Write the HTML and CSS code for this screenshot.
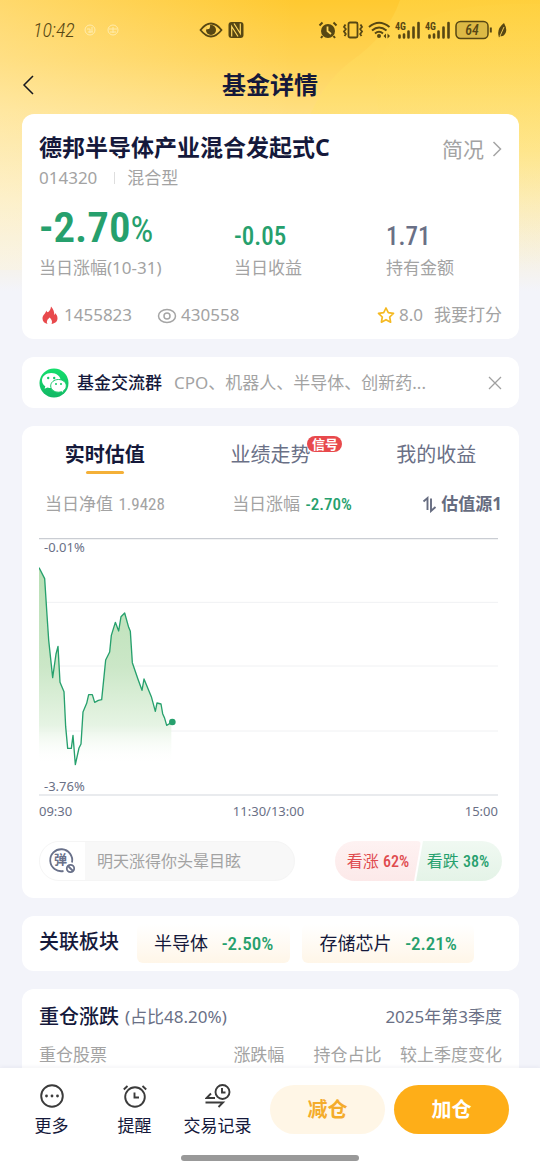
FILE: index.html
```html
<!DOCTYPE html>
<html lang="zh-CN">
<head>
<meta charset="utf-8">
<meta name="viewport" content="width=device-width, initial-scale=1">
<title>基金详情</title>
<link rel="stylesheet" href="styles.css">
</head>
<body>
<div class="app">
  <svg class="backdrop" viewBox="0 0 540 300" preserveAspectRatio="none" aria-hidden="true">
    <defs>
      <linearGradient id="sky" x1="0" y1="0" x2="0" y2="1">
        <stop offset="0" stop-color="#ffc930"/>
        <stop offset="0.2" stop-color="#ffd355"/>
        <stop offset="0.37" stop-color="#ffdf80"/>
        <stop offset="0.66" stop-color="#fcedbf"/>
        <stop offset="0.97" stop-color="#f3f4fa"/>
      </linearGradient>
      <linearGradient id="haze" x1="0" y1="0" x2="1" y2="0">
        <stop offset="0" stop-color="#fff6dd" stop-opacity="0.35"/>
        <stop offset="0.55" stop-color="#fff6dd" stop-opacity="0"/>
      </linearGradient>
      <linearGradient id="glow" x1="0" y1="0" x2="0" y2="1">
        <stop offset="0" stop-color="#ffd445" stop-opacity="0.6"/>
        <stop offset="0.5" stop-color="#ffe680" stop-opacity="0.5"/>
        <stop offset="0.9" stop-color="#f8efcf" stop-opacity="0"/>
      </linearGradient>
    </defs>
    <rect width="540" height="300" fill="url(#sky)"/>
    <rect width="540" height="270" fill="url(#haze)"/>
    <path d="M400 0Q388 36 350 62 322 84 308 120V300H540V0Z" fill="url(#glow)"/>
    <path d="M540 4Q380 0 376 80 376 110 384 130V300H540Z" fill="url(#glow)" opacity=".35"/>
  </svg>

  <header class="top">
    <div class="status">
      <div class="status-left">
        <span class="clock">10:42</span>
        <svg width="36" height="14" viewBox="0 0 36 14" fill="none" stroke="#fff3c4" opacity=".75"><circle cx="7" cy="7" r="5"/><path d="M4 6h3v4M9 4v5M5 9h5"/><circle cx="30" cy="7" r="5"/><path d="M26 6h8M27 9h6M30 4v6"/></svg>
      </div>
      <div class="status-mid">
        <svg width="24" height="18" viewBox="0 0 24 18"><path d="M1.500 9Q6.500 2.500 12 2.500T22.500 9Q17.500 15.500 12 15.500T1.500 9Z" fill="none" stroke="#574713" stroke-width="1.800"/><circle cx="12" cy="9" r="5" fill="#574713"/><path d="M10.500 3.500a3 3 0 0 1-1 4.500L7 8.500 7.500 5z" fill="#ffd75e"/></svg>
        <svg width="16" height="18" viewBox="0 0 16 18"><rect x=".5" y="1" width="15" height="16" rx="3" fill="#574713"/><path d="M3.700 15.500V5.500l6.300 10M12.300 2.500v10L6 2.500" fill="none" stroke="#ffd75e" stroke-width="1.200"/></svg>
      </div>
      <div class="status-right">
        <svg width="20" height="18" viewBox="0 0 20 18"><circle cx="10" cy="10" r="7" fill="#574713"/><path d="M1.500 4.500 4.500 1.500M18.500 4.500 15.500 1.500M4.500 15 3 17M15.500 15l1.500 2" stroke="#574713" stroke-width="2"/><path d="M9.500 5.500V10l3.500 3" fill="none" stroke="#ffd75e" stroke-width="1.800"/></svg>
        <svg width="22" height="18" viewBox="0 0 22 18" fill="none" stroke="#574713" stroke-width="1.800"><rect x="6.500" y="1.500" width="9" height="15" rx="1.500"/><path d="M3.500 3.500 2 6l1.800 2L2 10.500 3.800 13 2.500 15M18.500 3.500 20 6l-1.800 2 1.800 2.500-1.800 2.500 1.300 2"/></svg>
        <svg width="23" height="18" viewBox="0 0 23 18" fill="none" stroke="#574713" stroke-width="2"><path d="M1 6Q11 -2.500 21.500 6M4 9.500q7-6 14.500 0M7 12.500q4-3.500 8 0"/><circle cx="11" cy="15" r="2" fill="#574713" stroke="none"/><path d="m18 12.500-2.500 2.500 2.500 2.500zM19.500 12.500 22 15l-2.500 2.500z" fill="#574713" stroke="none"/></svg>
        <svg width="26" height="18" viewBox="0 0 26 18"><text class="tiny" x="0" y="9">4G</text><path d="M4.500 16.500v-2M9 16.500v-3M13.500 16.500v-6M18.500 16.500V6.500M23.500 16.500V2" stroke="#574713" stroke-width="2.600" stroke-linecap="round"/></svg>
        <svg width="26" height="18" viewBox="0 0 26 18"><text class="tiny" x="0" y="9">4G</text><path d="M4.500 16.500v-2M9 16.500v-3M13.500 16.500v-6M18.500 16.500V6.500M23.500 16.500V2" stroke="#574713" stroke-width="2.600" stroke-linecap="round"/></svg>
        <svg width="38" height="20" viewBox="0 0 38 20"><rect x="1" y="1.500" width="32" height="17" rx="4.500" fill="#dcb945" stroke="#574713" stroke-width="1.500"/><path d="M35.800 7.500v5" stroke="#574713" stroke-width="2"/><text class="charge" x="17" y="15" text-anchor="middle">64</text></svg>
        <svg width="10" height="16" viewBox="0 0 10 16"><path d="M7 1q4 7 1 11-2 3-5 2l-1 1.500Q-1 7 7 1Z" fill="#574713"/><path d="M7 5 3 14" stroke="#ffd75e" stroke-width=".9"/></svg>
      </div>
    </div>
    <div class="titlebar">
      <button class="back" type="button" aria-label="返回"><svg width="14" height="20" viewBox="0 0 14 20" fill="none" stroke="#17181f" stroke-width="1.500"><path d="M11 1 2 10l9 9"/></svg></button>
      <h1>基金详情</h1>
    </div>
  </header>

  <main class="content">
    <section class="card fund">
      <div class="fund-head">
        <div>
          <h2>德邦半导体产业混合发起式C</h2>
          <p class="fund-sub"><span>014320</span><i></i><span>混合型</span></p>
        </div>
        <a class="brief" href="#brief">简况<svg width="10" height="16" viewBox="0 0 10 16" fill="none" stroke="#a5a5a5" stroke-width="1.500"><path d="m1.500 1 7 7-7 7"/></svg></a>
      </div>
      <dl class="stats">
        <div><dd class="num big green">-2.70<span class="pct">%</span></dd><dt>当日涨幅(10-31)</dt></div>
        <div><dd class="num green">-0.05</dd><dt>当日收益</dt></div>
        <div><dd class="num slate">1.71</dd><dt>持有金额</dt></div>
      </dl>
      <div class="meta">
        <span class="meta-item"><svg width="22" height="20" viewBox="0 0 22 20"><path d="M12 1.500c-.4 3-1 4-3 5.800C7.800 6.800 7.500 6.200 7.300 5.500 6.500 9 3.500 10 3.500 13.500c0 3 2.200 5 5.200 5.500-1-1-1-2.300-.5-3.600.5-1.300 1.600-1.600 2.300-2.900 1.700 1.300 3.400 4 2 6.500 3.500-.6 6-2.500 6-5.800 0-2.400-1.200-3.600-2.200-5.200-.1 1-.4 1.500-1 2C15.500 6.500 14 3.500 12 1.500Z" fill="#e8494c"/></svg>1455823</span>
        <span class="meta-item"><svg width="22" height="20" viewBox="0 0 22 20" fill="none" stroke="#a5a5a5" stroke-width="1.500"><ellipse cx="11" cy="11" rx="8.500" ry="6.500"/><circle cx="11" cy="11" r="3"/></svg>430558</span>
        <a class="meta-item score" href="#score"><svg width="20" height="20" viewBox="0 0 20 20" fill="none" stroke="#f5b921" stroke-width="1.700" stroke-linejoin="round"><path d="m10 3 2.300 4.700 5.200.7-3.800 3.600.9 5.200L10 14.700l-4.600 2.500.9-5.200L2.500 8.400l5.200-.7z"/></svg><span>8.0</span><span>我要打分</span></a>
      </div>
    </section>

    <section class="card group">
      <svg width="30" height="30" viewBox="0 0 30 30"><defs><linearGradient id="wx" x1="0" y1="0" x2="0" y2="1"><stop offset="0" stop-color="#14df6c"/><stop offset="1" stop-color="#12b765"/></linearGradient></defs><circle cx="15" cy="15" r="14.500" fill="url(#wx)"/><path d="M12.300 5C7 5 3 8.300 3 12.500c0 2.400 1.300 4.500 3.300 5.800L5.600 20.800 8.500 19.400c1.200.4 2.400.6 3.800.6 5.200 0 9.300-3.200 9.300-7.500S17.500 5 12.300 5Z" fill="#fff"/><circle cx="9.200" cy="10" r="1.200" fill="#13c868"/><circle cx="15.200" cy="10" r="1.200" fill="#13c868"/><path d="M19.500 11.500c-4.400 0-7.800 2.800-7.800 6.400s3.400 6.300 7.800 6.300c1.100 0 2-.2 3-.5l2.500 1.300-.6-2.200c1.700-1.200 2.900-2.900 2.900-4.900 0-3.600-3.400-6.400-7.800-6.400Z" fill="#fff" stroke="#13c868"/><circle cx="17" cy="16" r="1" fill="#13c868"/><circle cx="22" cy="16" r="1" fill="#13c868"/></svg>
      <strong>基金交流群</strong>
      <span class="topics">CPO、机器人、半导体、创新药...</span>
      <button class="close" type="button" aria-label="关闭"><svg width="14" height="14" viewBox="0 0 14 14" stroke="#a0a0a0" stroke-width="1.300"><path d="m1 1 12 12M13 1 1 13"/></svg></button>
    </section>

    <section class="card valuation">
      <nav class="tabs">
        <button class="tab active" type="button">实时估值</button>
        <button class="tab" type="button"><span class="tab-label">业绩走势<em class="badge">信号</em></span></button>
        <button class="tab" type="button">我的收益</button>
      </nav>
      <div class="quote">
        <span>当日净值 <b class="num net">1.9428</b></span>
        <span>当日涨幅 <b class="num green">-2.70%</b></span>
        <button class="source" type="button"><svg width="15" height="18" viewBox="0 0 15 18" fill="none" stroke="#666c80" stroke-width="1.900"><path d="M1.500 6.500 5.500 3v12M9 3.500v12.500l4.500-4"/></svg>估值源1</button>
      </div>
      <div class="chart">
        <span class="limit high">-0.01%</span>
        <svg viewBox="27 24 1377 774" preserveAspectRatio="none" role="img" aria-label="估值走势">
          <defs><linearGradient id="area" x1="0" y1="0" x2="0" y2="1"><stop offset="0" stop-color="#b8dfb4"/><stop offset="0.500" stop-color="#cbe7c7"/><stop offset="0.800" stop-color="#e6f4e4"/><stop offset="1" stop-color="#fff" stop-opacity="0"/></linearGradient></defs>
          <path d="M27 217H1404M27 408H1404M27 603H1404" stroke="#f0f1f3" stroke-width="3"/>
          <path d="M27 26H1404" stroke="#cacdd3" stroke-width="4"/>
          <path d="M27 795H1404" stroke="#e2e4e8" stroke-width="4"/>
          <path d="M27 113 44 146 50 240 56 330 68 443 78 372 84 349 90 457 102 485 107 590 113 655H124L129 616 136 704 147 654 153 642 159 546 170 520 176 494H187L194 517 205 511 215 509 222 440 227 390 239 366 244 316 256 277 266 303 273 260 284 249 296 292 301 304 307 398 324 448 336 481 342 447 364 500 376 544 381 519 393 522 398 551 404 565 410 586 424 576V700H27Z" fill="url(#area)"/>
          <path d="M27 113 44 146 50 240 56 330 68 443 78 372 84 349 90 457 102 485 107 590 113 655H124L129 616 136 704 147 654 153 642 159 546 170 520 176 494H187L194 517 205 511 215 509 222 440 227 390 239 366 244 316 256 277 266 303 273 260 284 249 296 292 301 304 307 398 324 448 336 481 342 447 364 500 376 544 381 519 393 522 398 551 404 565 410 586 427 576" fill="none" stroke="#26a06d" stroke-width="4" stroke-linejoin="round"/>
          <circle cx="427" cy="576" r="10" fill="#26a06d"/>
        </svg>
        <span class="limit low">-3.76%</span>
      </div>
      <div class="axis"><span>09:30</span><span>11:30/13:00</span><span>15:00</span></div>
      <div class="actions">
        <div class="barrage">
          <button type="button" aria-label="弹幕开关"><svg width="28" height="28" viewBox="0 0 28 28" fill="none" stroke="#69718a" stroke-width="1.800"><path d="M15.500 24A11 11 0 1 1 24 15.500"/><text x="12.500" y="17" text-anchor="middle" class="dan">弹</text><circle cx="22.500" cy="21.500" r="3.700"/><path d="m20 19 5 5"/></svg></button>
          <input type="text" aria-label="弹幕" placeholder="明天涨得你头晕目眩">
        </div>
        <div class="votes">
          <button class="vote up" type="button">看涨 <b class="num">62%</b></button>
          <button class="vote down" type="button">看跌 <b class="num">38%</b></button>
        </div>
      </div>
    </section>

    <section class="card sectors">
      <h3>关联板块</h3>
      <a class="chip" href="#semi">半导体 <b class="num green">-2.50%</b></a>
      <a class="chip" href="#memory">存储芯片 <b class="num green">-2.21%</b></a>
    </section>

    <section class="card holdings">
      <div class="holdings-head"><h3>重仓涨跌</h3><span>(占比48.20%)</span><span class="period">2025年第3季度</span></div>
      <table><thead><tr><th>重仓股票</th><th>涨跌幅</th><th>持仓占比</th><th>较上季度变化</th></tr></thead></table>
    </section>
  </main>

  <footer class="bottom">
    <div class="toolbar">
      <button class="tool" type="button"><svg width="26" height="26" viewBox="0 0 26 26" fill="none" stroke="#3b3b3b" stroke-width="1.900"><circle cx="13" cy="13" r="10.800"/><g fill="#3b3b3b" stroke="none"><circle cx="7.500" cy="13" r="1.400"/><circle cx="13" cy="13" r="1.400"/><circle cx="18.500" cy="13" r="1.400"/></g></svg>更多</button>
      <button class="tool" type="button"><svg width="26" height="26" viewBox="0 0 26 26" fill="none" stroke="#3b3b3b" stroke-width="1.900"><circle cx="13" cy="14" r="9.800"/><path d="M1.800 6.500 5.500 3M24.200 6.500 20.500 3M12.500 9.500v5h4.500"/></svg>提醒</button>
      <button class="tool" type="button"><svg width="26" height="26" viewBox="0 0 26 26" fill="none" stroke="#3b3b3b" stroke-width="1.900"><circle cx="17.500" cy="9" r="7"/><path d="M17 5v4.500h3.500M10 15H1.500L6 10.500M.500 19.500H18L13.500 24"/></svg>交易记录</button>
      <button class="cta light" type="button">减仓</button>
      <button class="cta" type="button">加仓</button>
    </div>
    <div class="home"></div>
  </footer>
</div>
</body>
</html>
```
FILE: styles.css
```css
* { box-sizing: border-box; }

body,
h1, h2, h3, p, dl, dd, dt { margin: 0; }

body {
  font-family: "Noto Sans", "Noto Sans CJK SC", sans-serif;
  font-size: 17px;
  line-height: 24px;
  color: #15193b;
  background: #f3f4fa;
}

button,
input {
  font: inherit;
  color: inherit;
  border: 0;
  padding: 0;
  margin: 0;
  background: none;
}

a { color: inherit; text-decoration: none; }
svg { display: block; flex: none; }

.app {
  position: relative;
  display: flex;
  flex-direction: column;
  height: 100vh;
}

.backdrop {
  position: absolute;
  inset: 0;
  width: 100%;
  height: 300px;
}

.num {
  font-family: "Roboto Condensed", "Liberation Sans Narrow", Roboto, sans-serif;
  font-weight: 500;
}
.green { color: #26a06d; }
.slate { color: #6a7086; }

/* Status bar and title */
.top { position: relative; }

.status {
  display: flex;
  align-items: center;
  height: 60px;
  padding: 0 33px;
}
.status-left,
.status-mid,
.status-right { display: flex; align-items: center; }
.status-left { flex: 0 0 35%; gap: 8px; }
.status-mid { flex: 1; gap: 5px; }
.status-right { gap: 4px; }
.clock {
  font-family: "Roboto Condensed", "Liberation Sans Narrow", Roboto, sans-serif;
  font-style: italic;
  font-weight: 300;
  font-size: 20px;
  color: #574713;
}
.tiny { font: 700 10px "Roboto Condensed", "Liberation Sans Narrow", Roboto, sans-serif; fill: #574713; }
.charge { font: italic 500 14px "Roboto Condensed", "Liberation Sans Narrow", Roboto, sans-serif; fill: #574713; }

.titlebar {
  display: grid;
  grid-template-columns: 1fr auto 1fr;
  align-items: center;
  height: 54px;
  padding: 0 22px 4px;
}
.titlebar h1 { font-size: 24px; line-height: 32px; }
.back { justify-self: start; }

/* Cards */
.content {
  position: relative;
  flex: 1;
  min-height: 0;
  overflow-y: auto;
  scrollbar-width: none;
  display: flex;
  flex-direction: column;
  gap: 18px;
  padding: 0 21px 0 22px;
}
.card {
  flex: none;
  padding: 0 17px;
  border-radius: 12px;
  background: #fff;
}

.fund { padding-top: 19px; padding-bottom: 12px; color: #a3a3a3; }
.fund-head { display: flex; justify-content: space-between; }
.fund h2 { font-size: 23px; line-height: 28px; color: #15193b; }
.fund-sub { display: flex; align-items: center; margin-top: 5px; }
.fund-sub i { width: 1px; height: 12px; margin: 0 12px 0 17px; background: #dedede; }
.brief {
  display: flex;
  align-items: center;
  gap: 8px;
  height: 32px;
  font-size: 21px;
}
.stats {
  display: grid;
  grid-template-columns: 195fr 152fr 116fr;
  margin-top: 17px;
}
.stats div { display: flex; flex-direction: column; justify-content: flex-end; }
.stats dt { margin-top: 9px; }
.stats dd { font-size: 25px; line-height: 20px; }
.stats dd.big { font-size: 43px; font-weight: 600; line-height: 40px; }
.stats .pct { font-size: 36px; font-weight: 400; line-height: 20px; }
.meta { display: flex; gap: 24px; margin-top: 23px; }
.meta-item { display: flex; align-items: center; gap: 3px; }
.score { margin-left: auto; }
.score span + span { margin-left: 8px; }

.group { display: flex; align-items: center; height: 51px; }
.group strong { margin-left: 8px; font-weight: 500; }
.topics {
  flex: 1;
  margin-left: 12px;
  color: #a3a3a3;
  white-space: nowrap;
}

.tabs {
  display: grid;
  grid-template-columns: repeat(3, 1fr);
  margin: 0 -17px;
  font-size: 20px;
  line-height: 32px;
  color: #6a7086;
}
.tab {
  display: flex;
  flex-direction: column;
  align-items: center;
  height: 50px;
  padding-top: 13px;
}
.tab.active { font-weight: 700; color: #15193b; }
.tab.active::after {
  content: "";
  width: 38px;
  height: 3px;
  border-radius: 2px;
  background: #f4b038;
}
.tab-label { position: relative; }
.badge {
  position: absolute;
  left: 77px;
  top: -3px;
  width: 35px;
  border-radius: 8px;
  font-size: 13px;
  font-style: normal;
  font-weight: 700;
  line-height: 16px;
  text-align: center;
  color: #fff;
  background: #e8494c;
}

.quote {
  display: grid;
  grid-template-columns: 187fr 190fr auto;
  margin-top: 16px;
  padding-left: 6px;
  color: #a3a3a3;
}
.quote .num { margin-left: 1px; }
.quote .net { font-weight: 400; }
.source {
  display: flex;
  align-items: center;
  gap: 4px;
  font-weight: 700;
  color: #666c80;
}
.chart { position: relative; margin: 22px 4px 0 0; }
.chart svg { width: 100%; height: 258px; }
.limit { position: absolute; left: 5px; font-size: 13px; line-height: 16px; color: #6a7086; }
.high { top: 1px; }
.low { bottom: 2px; }
.axis {
  display: flex;
  justify-content: space-between;
  margin: 5px 4px 0 0;
  font-size: 13px;
  line-height: 20px;
  color: #6a7086;
}

.actions { display: flex; gap: 40px; padding: 20px 0 17px; font-size: 16px; }
.barrage {
  flex: 1;
  min-width: 0;
  display: flex;
  height: 40px;
  overflow: hidden;
  border: 1px solid #f5f5f5;
  border-radius: 20px;
  background: #f8f8f8;
}
.barrage button { padding: 0 9px 0 8px; background: #fff; }
.barrage input { flex: 1; min-width: 0; padding-left: 12px; }
.barrage input::placeholder { color: #a3a3a3; opacity: 1; }
.dan { font: 700 13px "Noto Sans CJK SC", sans-serif; fill: #69718a; stroke: none; }
.votes { display: flex; }
.vote { height: 40px; }
.up {
  width: 86px;
  border-radius: 20px 4px 4px 20px;
  color: #df4a4d;
  background: linear-gradient(#fef2f2, #fce9e9);
  clip-path: polygon(0 0, 100% 0, calc(100% - 7px) 100%, 0 100%);
}
.down {
  width: 88px;
  margin-left: -7px;
  border-radius: 4px 20px 20px 4px;
  color: #26a06d;
  background: linear-gradient(#f0f9f2, #e4f3e7);
  clip-path: polygon(9px 0, 100% 0, 100% 100%, 2px 100%);
}

.sectors { display: flex; align-items: center; gap: 12px; height: 55px; }
.sectors h3,
.holdings h3 { font-size: 20px; line-height: 28px; font-weight: 500; }
.sectors h3 { margin-right: 6px; padding-bottom: 4px; }
.chip {
  padding: 5px 17px;
  border-radius: 6px;
  font-size: 18px;
  line-height: 28px;
  background: linear-gradient(#fff, #fff6e8);
}
.chip b { margin-left: 9px; font-size: 19px; }

.holdings { padding-top: 14px; padding-bottom: 20px; }
.holdings-head { display: flex; align-items: center; gap: 6px; color: #6a7086; }
.holdings h3 { color: #15193b; }
.period { margin-left: auto; }
.holdings table { width: 100%; margin-top: 12px; border-collapse: collapse; }
.holdings th { padding: 0; font-weight: 400; text-align: right; color: #a3a3a3; white-space: nowrap; }
.holdings th:first-child { width: 30%; text-align: left; }
.holdings th:nth-child(2) { width: 23%; }
.holdings th:nth-child(3) { width: 21%; }
.holdings th:last-child { width: 26%; }

/* Bottom toolbar */
.bottom {
  position: relative;
  background: #fff;
  box-shadow: 0 -1px 4px rgba(30, 40, 80, .06);
}
.toolbar { display: flex; padding: 15px 31px 0 10px; }
.tool {
  flex: 0 0 83px;
  display: flex;
  flex-direction: column;
  align-items: center;
  gap: 5px;
}
.cta {
  flex: 1;
  height: 49px;
  margin: 2px 0 0 9px;
  border-radius: 25px;
  font-size: 20px;
  font-weight: 700;
  color: #fff;
  background: #feae18;
}
.cta.light { margin-left: 11px; color: #f4ac2b; background: #fff6e6; }
.home {
  width: 33%;
  height: 6px;
  margin: 17px auto 9px;
  border-radius: 3px;
  background: #999;
}
```
